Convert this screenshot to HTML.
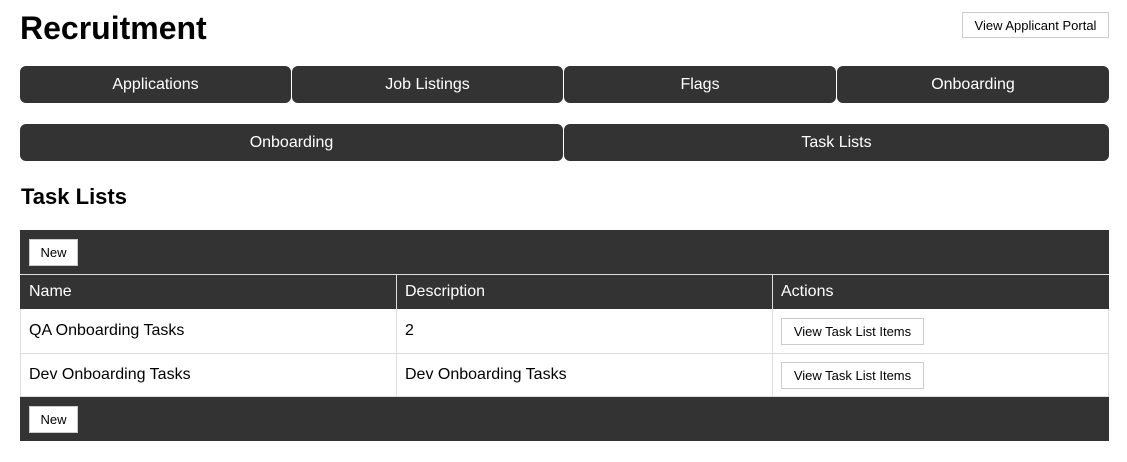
<!DOCTYPE html>
<html><head><style>
*{box-sizing:border-box;margin:0;padding:0}
body{width:1127px;height:462px;background:#fff;font-family:"Liberation Sans",Arial,sans-serif;position:relative;color:#000}
.a{position:absolute}
h1{position:absolute;left:20px;top:10px;font-size:32px;font-weight:bold}
h2{position:absolute;left:21px;top:184px;font-size:22px;font-weight:bold}
.btn{position:absolute;background:#fff;border:1px solid #ccc;font-size:13px;display:flex;align-items:center;justify-content:center}
.nav{position:absolute;background:#333;color:#fff;border-radius:6px;font-size:16px;display:flex;align-items:center;justify-content:center;height:37px}
.bar{position:absolute;left:20px;width:1089px;background:#333}
.cell{position:absolute;font-size:16px;display:flex;align-items:center;padding-left:9px}
</style></head><body>
<h1>Recruitment</h1>
<div class="btn" style="left:962px;top:12px;width:147px;height:26px">View Applicant Portal</div>
<div class="nav" style="left:20px;top:66px;width:271px">Applications</div>
<div class="nav" style="left:292px;top:66px;width:271px">Job Listings</div>
<div class="nav" style="left:564px;top:66px;width:272px">Flags</div>
<div class="nav" style="left:837px;top:66px;width:272px">Onboarding</div>
<div class="nav" style="left:20px;top:124px;width:543px">Onboarding</div>
<div class="nav" style="left:564px;top:124px;width:545px">Task Lists</div>
<h2>Task Lists</h2>
<div class="bar" style="top:230px;height:44px"></div>
<div class="btn" style="left:29px;top:239px;width:49px;height:27px">New</div>
<div class="bar" style="top:274px;height:35px;border-top:1px solid #ddd"></div>
<div class="a" style="left:396px;top:274px;width:1px;height:35px;background:#ddd"></div>
<div class="a" style="left:772px;top:274px;width:1px;height:35px;background:#ddd"></div>
<div class="cell" style="left:20px;top:274px;height:35px;color:#fff">Name</div>
<div class="cell" style="left:396px;top:274px;height:35px;color:#fff">Description</div>
<div class="cell" style="left:772px;top:274px;height:35px;color:#fff">Actions</div>
<div class="a" style="left:20px;top:309px;width:1089px;height:88px;border:1px solid #ddd;border-top:none"></div>
<div class="a" style="left:20px;top:353px;width:1089px;height:1px;background:#ddd"></div>
<div class="a" style="left:396px;top:309px;width:1px;height:88px;background:#ddd"></div>
<div class="a" style="left:772px;top:309px;width:1px;height:88px;background:#ddd"></div>
<div class="cell" style="left:20px;top:309px;height:44px">QA Onboarding Tasks</div>
<div class="cell" style="left:396px;top:309px;height:44px">2</div>
<div class="btn" style="left:781px;top:318px;width:143px;height:27px">View Task List Items</div>
<div class="cell" style="left:20px;top:353px;height:44px">Dev Onboarding Tasks</div>
<div class="cell" style="left:396px;top:353px;height:44px">Dev Onboarding Tasks</div>
<div class="btn" style="left:781px;top:362px;width:143px;height:27px">View Task List Items</div>
<div class="bar" style="top:397px;height:44px"></div>
<div class="btn" style="left:29px;top:406px;width:49px;height:27px">New</div>
</body></html>
